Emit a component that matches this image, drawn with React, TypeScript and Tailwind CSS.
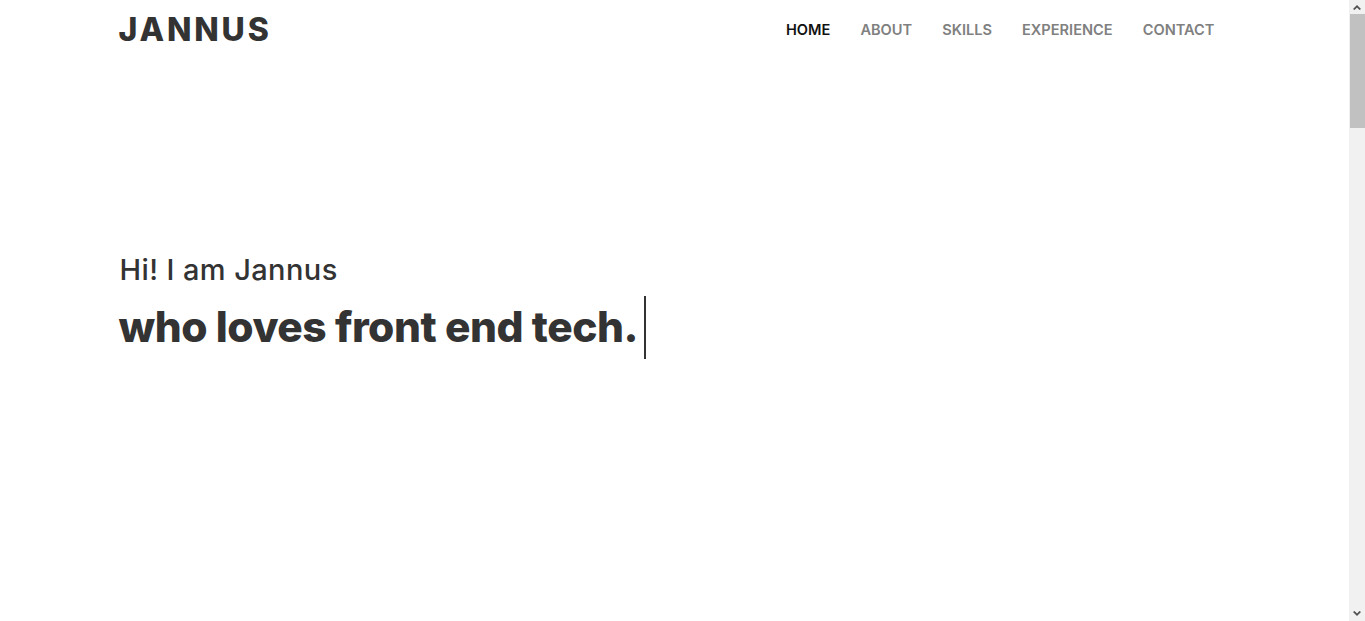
import React from "react";

const font = { fontFamily: "Inter, 'Noto Sans', sans-serif" };

function Scrollbar() {
  return (
    <div className="flex h-[621px] w-[16px] shrink-0 flex-col bg-[#f1f1f1]">
      <div className="flex h-[14px] items-center justify-center">
        <svg width="8" height="6" viewBox="0 0 8 6">
          <path d="M0 5 L4 1 L8 5 L6.5 6 L4 3.5 L1.5 6 Z" fill="#505050" />
        </svg>
      </div>
      <div className="flex-1">
        <div className="mx-auto h-[114px] w-[15px] bg-[#c1c1c1]" />
      </div>
      <div className="flex h-[14px] items-center justify-center">
        <svg width="8" height="6" viewBox="0 0 8 6">
          <path d="M0 1 L4 5 L8 1 L6.5 0 L4 2.5 L1.5 0 Z" fill="#505050" />
        </svg>
      </div>
    </div>
  );
}

export default function App() {
  const links = ["HOME", "ABOUT", "SKILLS", "EXPERIENCE", "CONTACT"];
  return (
    <div className="flex h-[621px] overflow-hidden bg-white text-[#333]" style={font}>
      <main className="min-w-0 flex-1">
        <header className="h-[60px]">
          <div className="mx-auto flex h-full w-[1140px] items-center justify-between px-[15px]">
            <div className="-ml-[1px] text-[32px] font-extrabold leading-none tracking-[2.8px] text-[#333]">JANNUS</div>
            <nav className="flex">
              {links.map((l, i) => (
                <a
                  key={l}
                  className={`px-[15px] text-[14.6px] font-semibold leading-none ${i === 0 ? "text-[#111]" : "text-[#808080]"}`}
                >
                  {l}
                </a>
              ))}
            </nav>
          </div>
        </header>
        <section className="h-[561px]">
          <div className="mx-auto w-[1140px] px-[15px] pt-[192px]">
            <h2 className="text-[29px] font-medium leading-[36px] tracking-[0.4px] text-[#333]">Hi! I am Jannus</h2>
            <div className="mt-[6px] flex items-center">
              <h1 className="-ml-[1px] text-[42.5px] font-extrabold leading-[56px] tracking-[-0.5px] text-[#333]">who loves front end tech.</h1>
              <span className="ml-[6px] mt-[2px] h-[63px] w-[2px] bg-[#333]" />
            </div>
          </div>
        </section>
      </main>
      <Scrollbar />
    </div>
  );
}
